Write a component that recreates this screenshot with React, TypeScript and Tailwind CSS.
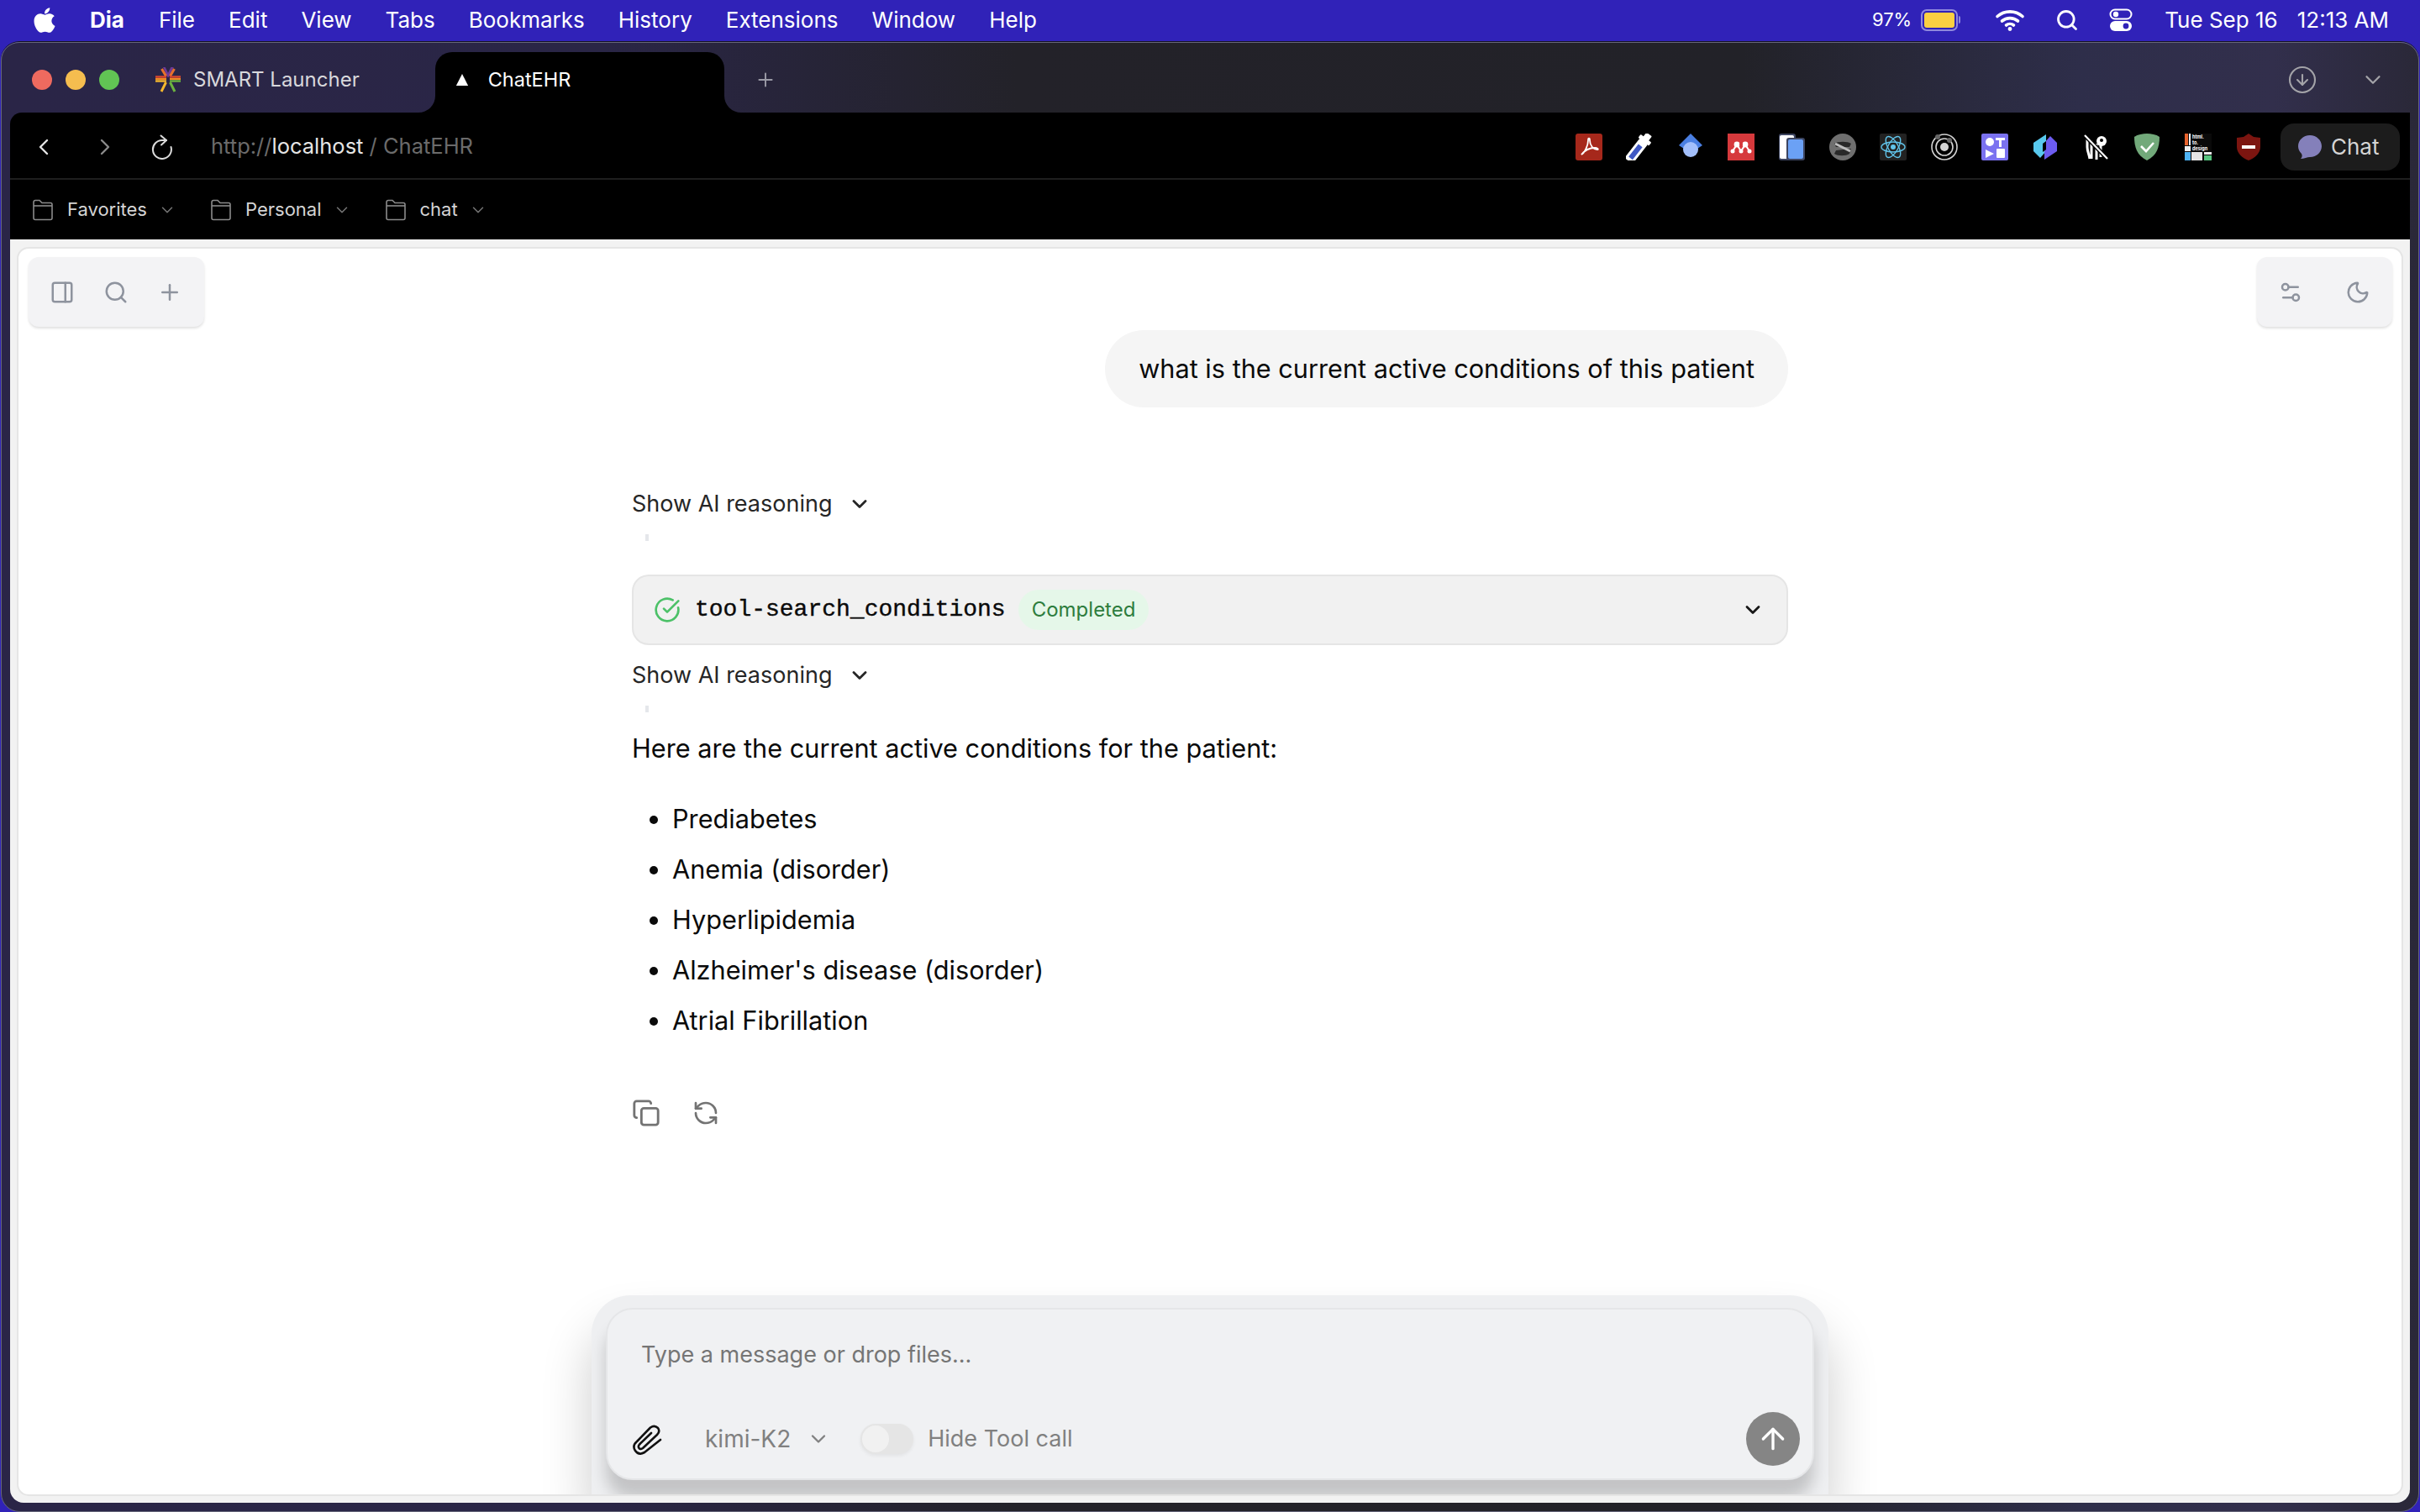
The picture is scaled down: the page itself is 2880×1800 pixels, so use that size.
import { ArrowUp, ChevronDown, ChevronLeft, ChevronRight, CircleArrowDown, CircleCheckBig, Copy, Moon, PanelRight, Plus, RefreshCcw, Search, Settings2 } from "lucide-react";
import { FaApple } from "react-icons/fa";

const menuItems = ["File", "Edit", "View", "Tabs", "Bookmarks", "History", "Extensions", "Window", "Help"];
const conditions = ["Prediabetes", "Anemia (disorder)", "Hyperlipidemia", "Alzheimer's disease (disorder)", "Atrial Fibrillation"];
const bookmarks = ["Favorites", "Personal", "chat"];

function Folder() {
  return (
    <svg width="24" height="28" viewBox="0 0 24 28" fill="none" stroke="#8a8a8a" strokeWidth="1.6">
      <path d="M1 4.5a2 2 0 0 1 2-2h5l3 3h10a2 2 0 0 1 2 2v16a2 2 0 0 1-2 2H3a2 2 0 0 1-2-2z" />
      <path d="M1 9h22" />
    </svg>
  );
}

function SmartLogo() {
  return (
    <svg width="32" height="32" viewBox="0 0 32 32" fill="none">
      <path d="M10 1h2.700L16 7.700 19.300 1h3.400L17 12.700h-2z" fill="#6f3a96" />
      <g strokeWidth="3">
        <path d="M8.500 3l5 8.500M23.500 3l-5 8.500" stroke="#e8702c" />
        <path d="M13.500 19L8 30" stroke="#f5b82e" />
        <path d="M18.500 19L24 30" stroke="#6cb33f" />
      </g>
      <path d="M1 12.500h13M18 12.500h13" stroke="#d9472f" strokeWidth="2.600" />
      <path d="M1 15h13M18 15h13" stroke="#f08a24" strokeWidth="1.800" />
      <path d="M1 17.500h13" stroke="#f5b82e" strokeWidth="2.400" />
      <path d="M18 17.500h13" stroke="#6cb33f" strokeWidth="2.400" />
    </svg>
  );
}

function WifiIcon() {
  return (
    <svg width="36" height="28" viewBox="0 0 36 28" fill="none" stroke="#fff" strokeWidth="3.6" strokeLinecap="round">
      <path d="M3 9.5c8.500-7.500 21.500-7.500 30 0" />
      <path d="M8.500 15c5.500-4.500 13.500-4.500 19 0" />
      <path d="M13.500 20c2.500-2 6.500-2 9 0" />
      <circle cx="18" cy="24.500" r="2.400" fill="#fff" stroke="none" />
    </svg>
  );
}

function ControlIcon() {
  return (
    <svg width="28" height="28" viewBox="0 0 28 28" fill="none">
      <rect x="1.500" y="1.500" width="25" height="11" rx="5.500" stroke="#fff" strokeWidth="2" />
      <circle cx="8" cy="7" r="3.200" fill="#fff" />
      <rect x="1" y="15" width="26" height="12" rx="6" fill="#fff" />
      <circle cx="20" cy="21" r="3.400" fill="#3022b8" />
    </svg>
  );
}

function ReloadIcon() {
  return (
    <svg width="30" height="30" viewBox="8 10 30 30" fill="none" stroke="#dcdcdc" strokeWidth="2" strokeLinecap="round" strokeLinejoin="round">
      <path d="M28 17h-5a11 11 0 1 0 10.500 8" />
      <path d="M21.500 11.500L28 17l-6 5.500" />
    </svg>
  );
}

function ClipIcon() {
  return (
    <svg width="40" height="42" viewBox="10 0 40 42" fill="none" stroke="#111" strokeWidth="2.600" strokeLinecap="round" strokeLinejoin="round">
      <path d="M46 22L27 37q-7 4-11-2-4-6 2-11L34 7.500q5-3.500 9 .5 3 4-1 8L25 32q-3 2-4.500 0-1.500-2 .5-4.500L35 14" />
    </svg>
  );
}

const extensions = [
  <svg key="adobe" viewBox="0 0 32 32"><rect width="32" height="32" rx="3" fill="#a6281b" /><path d="M7 25c4-2 8-11 8-17 0-3 2-3 2 0 0 6 4 11 9 11 2 0 0-2-3-2-6 0-12 3-16 8z" fill="none" stroke="#fff" strokeWidth="1.800" /></svg>,
  <svg key="dropper" viewBox="0 0 32 32"><g transform="rotate(38 16 16)"><rect x="10" y="7" width="12" height="30" rx="2" fill="#fff" /><rect x="13" y="14" width="6" height="19" fill="#3f58c4" /><rect x="8" y="3" width="16" height="5" rx="1" fill="#fff" /><rect x="12" y="-3" width="8" height="7" rx="1" fill="#fff" /></g></svg>,
  <svg key="scholar" viewBox="0 0 32 32"><path d="M16 0L30 14l-6 4H8l-6-4z" fill="#4a7fe2" /><circle cx="16" cy="19" r="9" fill="#a3bffb" /></svg>,
  <svg key="mendeley" viewBox="0 0 32 32"><rect width="32" height="32" fill="#d6393c" /><g fill="#fff"><circle cx="6" cy="21" r="2.500" /><circle cx="26" cy="21" r="2.500" /><circle cx="16" cy="21" r="2.500" /><circle cx="11" cy="13" r="3.400" /><circle cx="21" cy="13" r="3.400" /></g><path d="M6 21l5-8 5 8 5-8 5 8" fill="none" stroke="#fff" strokeWidth="2" /><circle cx="16" cy="13" r="2" fill="#d6393c" /></svg>,
  <svg key="phones" viewBox="0 0 32 32"><rect x="1" y="0" width="20" height="32" rx="3" fill="#3d4560" /><rect x="2" y="2" width="17" height="28" rx="2" fill="#fff" /><rect x="10" y="5" width="22" height="27" rx="3" fill="#3d4560" /><rect x="12" y="7" width="18" height="23" rx="2" fill="#6ba1f5" /></svg>,
  <svg key="stylus" viewBox="0 0 32 32"><circle cx="16" cy="16" r="16" fill="#6f6f6f" /><path d="M6 12c4-3 16-3 20 0l-2 4-16 0zM8 20l18-2-2 6c-4 3-14 3-18 0z" fill="#111" opacity=".75" /><path d="M7 12l18 9" stroke="#bdbdbd" strokeWidth="3" /></svg>,
  <svg key="react" viewBox="0 0 32 32" fill="none"><rect width="32" height="32" rx="2" fill="#222" /><g stroke="#61c4ea" strokeWidth="1.400"><ellipse cx="16" cy="16" rx="14" ry="6" /><ellipse cx="16" cy="16" rx="14" ry="6" transform="rotate(60 16 16)" /><ellipse cx="16" cy="16" rx="14" ry="6" transform="rotate(120 16 16)" /></g><circle cx="16" cy="16" r="3" fill="#61c4ea" /></svg>,
  <svg key="target" viewBox="0 0 32 32" fill="none"><circle cx="16" cy="16" r="15" stroke="#d4d4d4" strokeWidth="1.600" /><circle cx="16" cy="16" r="10" stroke="#d4d4d4" strokeWidth="1.600" /><circle cx="16" cy="16" r="5" fill="#d4d4d4" /><circle cx="8" cy="4" r="3" fill="#666" /><circle cx="22" cy="8" r="3" fill="#666" /></svg>,
  <svg key="shapes" viewBox="0 0 32 32"><rect width="32" height="32" rx="2" fill="#7b72f0" /><circle cx="10" cy="10" r="5" fill="#fff" /><path d="M17 5h11v3h-4v8h-3V8h-4zM5 19l10 5-10 5z" fill="#fff" /><rect x="18" y="18" width="10" height="11" rx="1" fill="#fff" /></svg>,
  <svg key="hex" viewBox="0 0 32 32"><path d="M17 1v20l-7 8-8-8V11z" fill="#58c9ee" /><path d="M15 31V11l7-8 8 8v10z" fill="#6d5cf0" /><path d="M17 9v10l-4 3V12z" fill="#000" /></svg>,
  <svg key="keys" viewBox="0 0 32 32" fill="none" stroke="#fff"><circle cx="22" cy="9" r="6" fill="#fff" stroke="none" /><circle cx="22" cy="8" r="2" fill="#000" stroke="none" /><path d="M5 4v12c0 5 2 8 3 14M10 8v22M16 12v19M21 14v14" strokeWidth="3" /><path d="M2 2l27 28" stroke="#000" strokeWidth="5" /><path d="M2 2l27 28" strokeWidth="2.200" /></svg>,
  <svg key="adguard" viewBox="0 0 32 32" fill="none"><path d="M16 0c5 0 11 1 15 4 0 12-3 22-15 28C4 26 1 16 1 4c4-3 10-4 15-4z" fill="#72a97a" /><path d="M9 15l6 6 9-10" stroke="#fff" strokeWidth="2.600" /></svg>,
  <svg key="html" viewBox="0 0 32 32"><rect width="32" height="32" fill="#0a0a0a" /><rect width="4" height="14" fill="#e8622c" /><rect x="5" width="2" height="14" fill="#eee" /><rect y="15" width="7" height="6" fill="#eee" /><rect y="22" width="7" height="10" fill="#4eb3f5" /><rect x="8" y="22" width="13" height="10" fill="#e5e5e5" /><rect x="23" y="22" width="9" height="3" fill="#eee" /><rect x="23" y="26" width="9" height="6" fill="#58c47f" /><text x="9" y="6" fontSize="5.500" fontWeight="700" fill="#fff" fontFamily="Inter, sans-serif">html.</text><text x="9" y="13" fontSize="5.500" fontWeight="700" fill="#fff" fontFamily="Inter, sans-serif">to.</text><text x="9" y="20" fontSize="5.500" fontWeight="700" fill="#fff" fontFamily="Inter, sans-serif">design</text></svg>,
  <svg key="block" viewBox="0 0 32 32"><path d="M16 0l6 4 8 1v11c0 7-6 13-14 16C8 29 2 23 2 16V5l8-1z" fill="#7c1510" /><rect x="8" y="14" width="16" height="4" fill="#fff" /></svg>,
];

function ReasoningToggle() {
  return (
    <>
      <div className="flex h-[40px] items-center text-[27px] text-[#262626]">
        <span>Show AI reasoning</span>
        <ChevronDown className="ml-[19px] h-[28px] w-[28px] text-[#262626]" strokeWidth={2.4} />
      </div>
      <div className="mt-[16px] ml-[16px] h-[8px] w-[4px] bg-[#e5e7eb]" />
    </>
  );
}

export default function App() {
  return (
    <div className="flex h-[1800px] w-[2880px] flex-col overflow-hidden bg-[#3022b8] font-['Inter',sans-serif]">
      {/* mac menu bar */}
      <div className="flex h-[50px] shrink-0 items-center pb-[3px] text-[26px] text-white">
        <FaApple className="ml-[37px] h-[34px] w-[32px]" />
        <span className="ml-[38px] font-bold">Dia</span>
        <div className="ml-[41px] flex gap-[40px]">
          {menuItems.map((item) => (
            <span key={item}>{item}</span>
          ))}
        </div>
        <div className="ml-auto flex items-center pr-[37px]">
          <span className="text-[22px]">97%</span>
          <div className="ml-[11px] flex items-center">
            <div className="h-[26px] w-[44px] rounded-[7px] border-2 border-[#8f88dd] p-[2px]">
              <div className="h-full w-[36px] rounded-[3px] bg-[#fbd042]" />
            </div>
            <div className="ml-[1px] h-[9px] w-[2px] rounded-r bg-[#8f88dd]" />
          </div>
          <div className="ml-[41px]"><WifiIcon /></div>
          <Search className="ml-[36px] h-[28px] w-[28px]" strokeWidth={2.4} />
          <div className="ml-[36px]"><ControlIcon /></div>
          <span className="ml-[38px]">Tue Sep 16</span>
          <span className="ml-[23px]">12:13 AM</span>
        </div>
      </div>

      {/* browser window */}
      <div className="mx-[1px] flex min-h-0 flex-1 flex-col rounded-[22px] border border-[#66667a] bg-[linear-gradient(90deg,#2a2547_0%,#2a2646_25%,#232229_42%,#222228_72%,#2e2e4a_86%,#322f4c_94%,#2a2838_100%)] shadow-[0_-1px_0_#15131f]">
        {/* tabs */}
        <div className="flex h-[83px] shrink-0 items-center pt-[5px] pl-[36px] pr-[39px]">
          <div className="flex gap-[16px]">
            <div className="h-[24px] w-[24px] rounded-full bg-[#ee6a5f]" />
            <div className="h-[24px] w-[24px] rounded-full bg-[#f5bd4f]" />
            <div className="h-[24px] w-[24px] rounded-full bg-[#61c454]" />
          </div>
          <div className="ml-[42px]"><SmartLogo /></div>
          <span className="ml-[14px] text-[24px] text-[#d8d8dc]">SMART Launcher</span>
          <div className="relative ml-[90px] flex h-[72px] w-[344px] items-center self-end rounded-t-[20px] bg-black pb-[6px] pl-[24px] text-[23.500px] text-white">
            <svg className="absolute bottom-0 -left-[20px]" width="20" height="20" viewBox="0 0 20 20"><path d="M20 0v20H0A20 20 0 0 0 20 0z" fill="#000" /></svg>
            <svg className="absolute -right-[20px] bottom-0" width="20" height="20" viewBox="0 0 20 20"><path d="M0 0v20h20A20 20 0 0 1 0 0z" fill="#000" /></svg>
            <svg width="16" height="16" viewBox="0 0 18 18"><path d="M9 1l8 16H1z" fill="#fff" /></svg>
            <span className="ml-[23px]">ChatEHR</span>
          </div>
          <Plus className="ml-[36px] h-[26px] w-[26px] text-[#9a9aa6]" strokeWidth={1.8} />
          <CircleArrowDown className="ml-auto h-[36px] w-[36px] text-[#a3a3a8]" strokeWidth={1.4} />
          <ChevronDown className="ml-[51px] h-[30px] w-[30px] text-[#a3a3a8]" strokeWidth={1.8} />
        </div>

        {/* address bar + bookmarks */}
        <div className="mx-[10px] shrink-0 rounded-tl-[14px] bg-black">
          <div className="flex h-[80px] items-center border-b-2 border-[#1e1e1e] pt-[3px] pl-[24px] pr-[12px]">
            <ChevronLeft className="h-[32px] w-[32px] text-[#e5e5e5]" strokeWidth={1.8} />
            <ChevronRight className="ml-[41px] h-[32px] w-[32px] text-[#8a8a8a]" strokeWidth={1.8} />
            <div className="ml-[37px]"><ReloadIcon /></div>
            <div className="ml-[43px] text-[25.500px] text-[#6b6b6b]">
              http://<span className="text-[#e5e5e5]">localhost</span> / ChatEHR
            </div>
            <div className="ml-auto flex gap-[28.400px]">
              {extensions.map((icon) => (
                <div key={icon.key} className="h-[32px] w-[32px]">{icon}</div>
              ))}
            </div>
            <div className="ml-[22px] flex h-[56px] w-[142px] items-center rounded-[16px] bg-[#1c1c1c] pl-[20px] text-[26px] text-[#d4d4d4]">
              <svg width="30" height="30" viewBox="0 0 30 30"><path d="M15 1c8 0 14 6 14 13s-6 13-14 13c-3 0-7 2-11 2 2-2 2-4 1-6-3-3-4-6-4-9C1 7 7 1 15 1z" fill="#8480ba" /></svg>
              <span className="ml-[10px]">Chat</span>
            </div>
          </div>
          <div className="flex h-[71px] items-center gap-[41px] pl-[27px]">
            {bookmarks.map((name) => (
              <div key={name} className="flex items-center text-[22px] text-[#d4d4d4]">
                <Folder />
                <span className="ml-[17px]">{name}</span>
                <ChevronDown className="ml-[13px] h-[22px] w-[22px] text-[#777]" strokeWidth={1.6} />
              </div>
            ))}
          </div>
        </div>

        {/* page */}
        <div className="mx-[10px] mb-[10px] flex min-h-0 flex-1 flex-col rounded-b-[16px] bg-[#f2f2f2] px-[8px] pt-[9px] pb-[8px]">
          <div className="relative flex min-h-0 flex-1 flex-col overflow-hidden rounded-[14px] border-2 border-[#e5e5e5] bg-white">
            <div className="absolute top-[10px] left-[12px] flex h-[83px] w-[209px] items-center gap-[34px] rounded-[12px] bg-[#f3f3f5] pl-[25px] text-[#8e939e] shadow-[0_2px_3px_rgba(0,0,0,0.12)]">
              <PanelRight className="h-[30px] w-[30px]" strokeWidth={2} />
              <Search className="h-[30px] w-[30px]" strokeWidth={2} />
              <Plus className="h-[30px] w-[30px]" strokeWidth={2} />
            </div>
            <div className="absolute top-[10px] right-[11px] flex h-[83px] w-[161px] items-center gap-[50px] rounded-[12px] bg-[#f3f3f5] pl-[25px] text-[#8e939e] shadow-[0_2px_3px_rgba(0,0,0,0.12)]">
              <Settings2 className="h-[30px] w-[30px]" strokeWidth={2} />
              <Moon className="h-[30px] w-[30px]" strokeWidth={2} />
            </div>

            <div className="mx-auto flex w-[1376px] flex-col pt-[97px]">
              <div className="flex h-[92px] items-center self-end rounded-full bg-[#f5f5f5] px-[40px] text-[30.700px] text-[#0a0a0a]">
                what is the current active conditions of this patient
              </div>
              <div className="mt-[95px]"><ReasoningToggle /></div>
              <div className="mt-[40px] flex h-[84px] items-center rounded-[20px] border-2 border-[#e5e5e5] bg-[#f1f1f1] pl-[24px] pr-[26px]">
                <CircleCheckBig className="h-[32px] w-[32px] text-[#4cc168]" strokeWidth={2} />
                <span className="ml-[17px] font-['Liberation_Mono',monospace] text-[28px] text-[#0a0a0a] [-webkit-text-stroke:0.4px_#0a0a0a]">tool-search_conditions</span>
                <span className="ml-[15px] flex h-[48px] items-center rounded-full bg-[#e5f7e9] px-[16px] text-[24px] text-[#2e7d3e]">Completed</span>
                <ChevronDown className="ml-auto h-[28px] w-[28px] text-[#171717]" strokeWidth={2.4} />
              </div>
              <div className="mt-[16px]"><ReasoningToggle /></div>
              <p className="mt-[21px] flex h-[44px] items-center text-[30.700px] text-[#0a0a0a]">Here are the current active conditions for the patient:</p>
              <ul className="mt-[40px] flex list-disc flex-col gap-[16px] pl-[48px] text-[30.700px] leading-[44px] text-[#0a0a0a]">
                {conditions.map((c) => (
                  <li key={c}>{c}</li>
                ))}
              </ul>
              <div className="mt-[71px] flex items-center gap-[38px] text-[#737373]">
                <Copy className="h-[34px] w-[34px]" strokeWidth={2} />
                <RefreshCcw className="h-[32px] w-[32px]" strokeWidth={2} />
              </div>
            </div>

            {/* composer */}
            <div className="mx-auto mt-auto w-[1472px] overflow-hidden rounded-t-[46px] bg-[#eeeff1] px-[17px] pt-[15px] pb-[17px] shadow-[0_40px_60px_rgba(0,0,0,0.2)]">
              <div className="flex h-[205px] flex-col rounded-[32px] border-2 border-[#e5e6e8] bg-[#f0f1f3] shadow-[0_22px_18px_rgba(0,0,0,0.18)]">
                <div className="pt-[37px] pl-[40px] text-[27px] leading-[34px] text-[#757575]">Type a message or drop files...</div>
                <div className="mt-auto flex items-center pb-[15px] pl-[27px] pr-[15px] text-[27px] text-[#808080]">
                  <ClipIcon />
                  <span className="ml-[49px] text-[28px]">kimi-K2</span>
                  <ChevronDown className="ml-[19px] h-[28px] w-[28px]" strokeWidth={2} />
                  <div className="ml-[36px] flex h-[36px] w-[63px] items-center rounded-full bg-[#e5e5e5] pl-[2px] shadow-[0_2px_4px_rgba(0,0,0,0.06)]">
                    <div className="h-[32px] w-[32px] rounded-full bg-[#f1f1f1]" />
                  </div>
                  <span className="ml-[17px]">Hide Tool call</span>
                  <div className="ml-auto flex h-[64px] w-[64px] items-center justify-center rounded-full bg-[#858585]">
                    <ArrowUp className="h-[40px] w-[40px] text-white" strokeWidth={2} />
                  </div>
                </div>
              </div>
            </div>
          </div>
        </div>
      </div>
    </div>
  );
}
